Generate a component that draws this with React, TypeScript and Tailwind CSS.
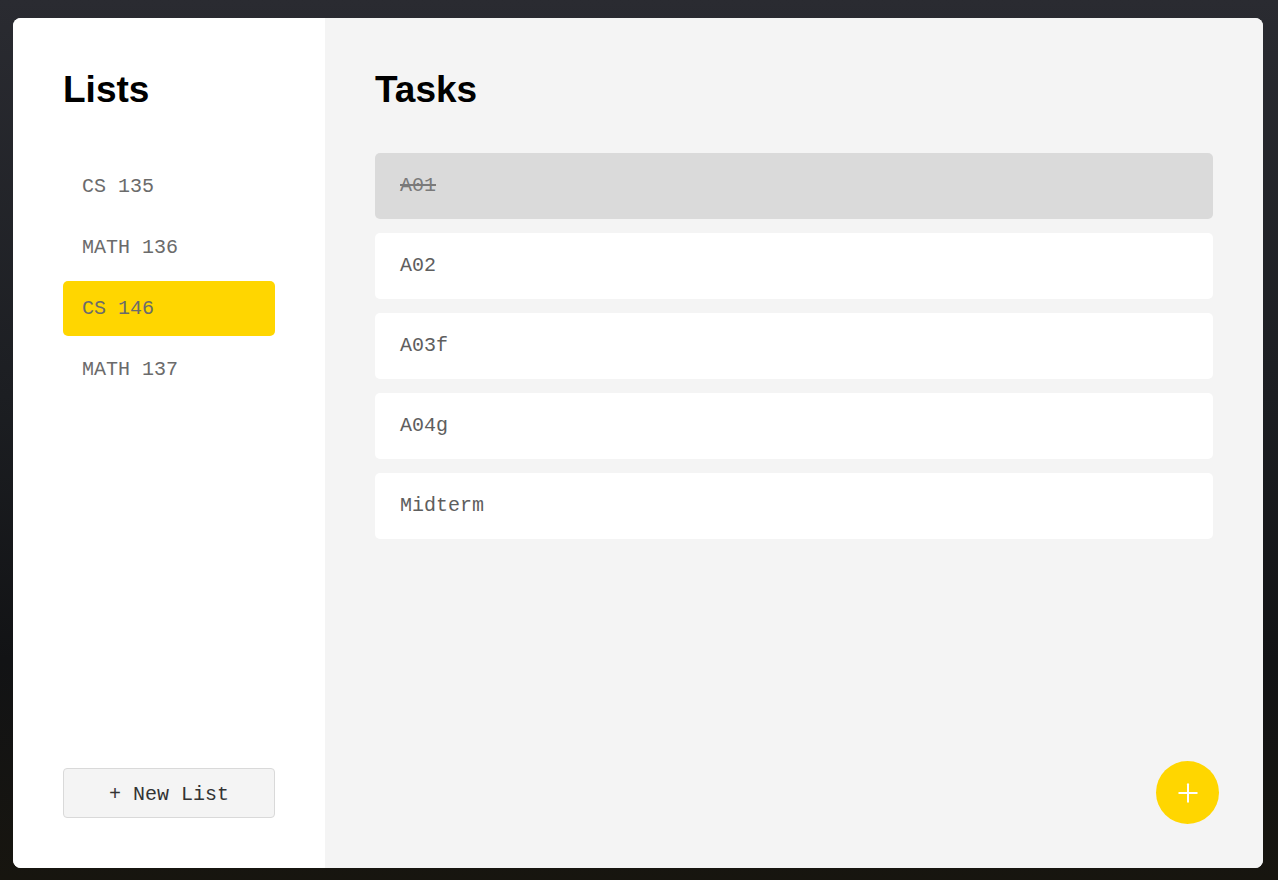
import { Plus } from 'lucide-react'

const lists = ['CS 135', 'MATH 136', 'CS 146', 'MATH 137']
const tasks = [
  { name: 'A01', done: true },
  { name: 'A02', done: false },
  { name: 'A03f', done: false },
  { name: 'A04g', done: false },
  { name: 'Midterm', done: false },
]

const mono = "font-['Liberation_Mono','Courier_New',monospace]"

export default function App() {
  const selected = 'CS 146'

  return (
    <div className="h-screen w-full bg-[linear-gradient(180deg,#2a2b31_0%,#1c1e22_45%,#121315_75%,#17150f_100%)] pt-[18px] pl-[13px] pr-[15px] pb-[12px]">
      <div className="flex h-full overflow-hidden rounded-lg bg-white">
        {/* Sidebar */}
        <aside className="flex w-[312px] shrink-0 flex-col bg-white px-[50px] pt-[53px] pb-[50px]">
          <h1 className="font-['Liberation_Sans',Arial,sans-serif] text-[37px] font-bold leading-none text-black">
            Lists
          </h1>
          <ul className="mt-[51px] flex flex-col gap-[6px]">
            {lists.map((l) => (
              <li
                key={l}
                className={`flex h-[55px] items-center rounded-[5px] px-[19px] text-[20px] text-[#6b6b6b] ${mono} ${
                  l === selected ? 'bg-[#ffd600]' : ''
                }`}
              >
                {l}
              </li>
            ))}
          </ul>
          <button
            className={`mt-auto flex h-[50px] w-full items-center justify-center rounded-[4px] border border-[#d9d9d9] bg-[#f4f4f4] pt-[3px] text-[20px] text-[#333] ${mono}`}
          >
            + New List
          </button>
        </aside>

        {/* Tasks */}
        <main className="relative flex-1 bg-[#f4f4f4] px-[50px] pt-[53px]">
          <h1 className="font-['Liberation_Sans',Arial,sans-serif] text-[37px] font-bold leading-none text-black">
            Tasks
          </h1>
          <div className="mt-[45px] flex flex-col gap-[14px]">
            {tasks.map((t) => (
              <div
                key={t.name}
                className={`flex h-[66px] items-center rounded-[5px] px-[25px] text-[20px] ${mono} ${
                  t.done ? 'bg-[#dadada] text-[#7a7a7a] line-through' : 'bg-white text-[#5e5e5e]'
                }`}
              >
                {t.name}
              </div>
            ))}
          </div>
          <button className="absolute right-[44px] bottom-[44px] flex h-[63px] w-[63px] items-center justify-center rounded-full bg-[#ffd600] text-white">
            <Plus size={30} strokeWidth={1.6} />
          </button>
        </main>
      </div>
    </div>
  )
}
